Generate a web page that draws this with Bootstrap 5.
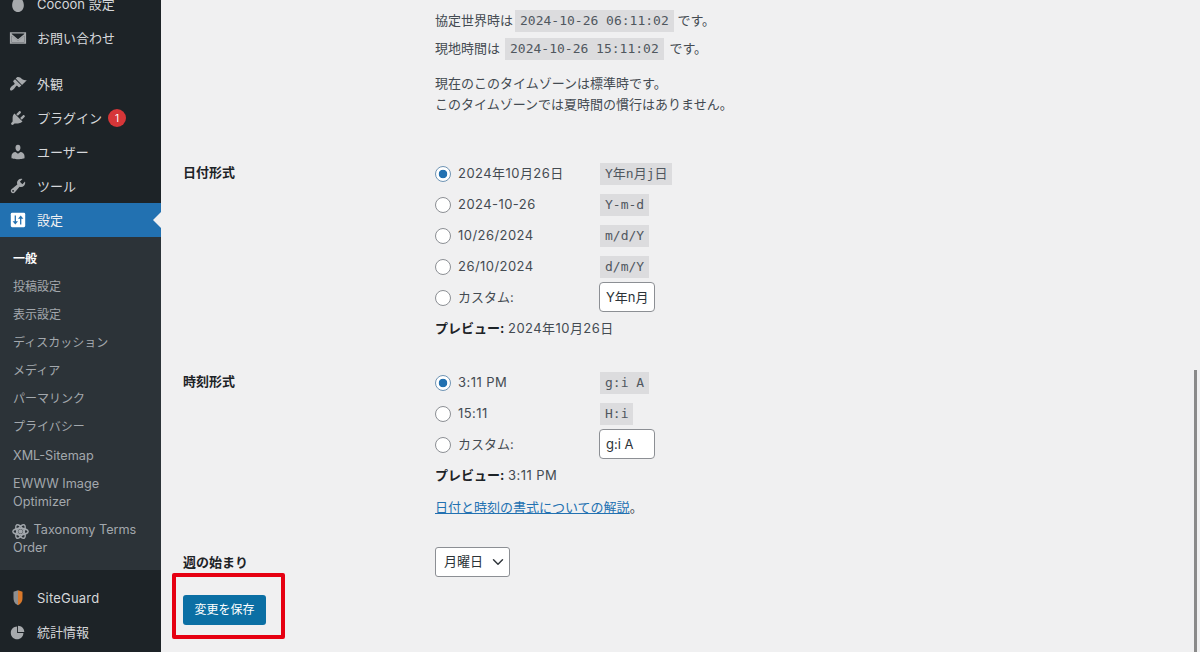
<!DOCTYPE html>
<html lang="ja">
<head>
    <meta charset="UTF-8">
    <meta name="viewport" content="width=device-width, initial-scale=1.0">
    <title>一般設定</title>
    <link href="https://cdn.jsdelivr.net/npm/bootstrap@5.3.0/dist/css/bootstrap.min.css" rel="stylesheet">
    <style>
        html, body { height: 652px; overflow: hidden; }
        body {
            background: #f0f0f1;
            color: #444b52;
            font-family: Inter, "Noto Sans CJK JP", sans-serif;
            font-size: 13px;
            line-height: 21px;
        }
        /* sidebar */
        .side-menu { width: 161px; height: 652px; flex: none; background: #1d2327; overflow: hidden; }
        .side-list { margin: -13px 0 0; padding: 0; list-style: none; }
        .side-item {
            position: relative;
            display: flex;
            align-items: center;
            height: 34px;
            padding-left: 9px;
            color: #d5d7da;
            font-size: 13px;
        }
        .side-item svg { flex: none; width: 18px; height: 18px; margin-right: 10px; fill: #a7aaad; }
        .side-gap { margin-top: 12px; }
        .side-active { background: #2271b1; color: #f0f0f1; }
        .side-active::after {
            content: "";
            position: absolute;
            right: 0;
            top: 9px;
            border: 8px solid transparent;
            border-right-color: #f0f0f1;
            border-left-width: 0;
        }
        .side-count {
            width: 18px;
            height: 18px;
            margin-left: 6px;
            border-radius: 50%;
            background: #d63638;
            color: #fff;
            font-size: 10px;
            line-height: 18px;
            text-align: center;
        }
        .side-latin { letter-spacing: .2px; }
        .side-sub { margin: 0 0 11px; padding: 8px 0 8px; list-style: none; background: #2c3338; }
        .side-sub li { padding: 5px 12px 5px 13px; font-size: 12px; line-height: 18px; color: #a3a8ad; }
        .side-sub li.side-current { color: #fff; font-weight: 600; }
        .side-sub li.sub-latin { font-size: 12.7px; }
        .side-sub li.sub-first { padding-top: 6px; }
        .side-sub svg { width: 17px; height: 17px; vertical-align: -3px; margin: -3px 1px -3px -1px; }
        /* form */
        .main-area { flex: 1; min-width: 0; padding: 10px 0 0 22px; }
        .field-row { display: flex; }
        .field-name { width: 252px; flex: none; font-weight: 600; color: #1d2327; }
        .mono-code {
            display: inline-block;
            padding: 0 5px;
            background: #dcdcde;
            color: #50575e;
            font-family: "DejaVu Sans Mono", "Noto Sans CJK JP", monospace;
            font-size: 13px;
            line-height: 22px;
        }
        .time-line { height: 22px; margin-bottom: 6px; }
        .time-utc code { margin-left: 2px; }
        .time-local code { margin: 0 2px 0 5px; }
        .time-note { margin: 12.500px 0 43.500px; }
        .choice-row { display: flex; align-items: center; height: 31px; margin: 0; }
        .choice-row .form-check-input {
            flex: none;
            width: 16px;
            height: 16px;
            margin: 0 7px 0 0;
            background: #fff;
            border: 1px solid #8c8f94;
        }
        .choice-row .form-check-input:checked {
            border-color: #6f94b4;
            background: #fff radial-gradient(circle, #2271b1 0, #2271b1 4px, #fff 4.600px);
        }
        .choice-text { width: 142px; flex: none; }
        .wide-digits { letter-spacing: .45px; }
        .custom-box {
            width: 56px;
            height: 30px;
            padding: 0 6px;
            margin: -2px 0 0 -1px;
            border: 1px solid #8c8f94;
            border-radius: 4px;
            background: #fff;
            color: #2c3338;
            font-size: 13px;
        }
        .preview-line { margin: 5px 0 0; }
        .preview-line b { font-weight: 700; color: #1d2327; }
        .format-group { margin-bottom: 28px; }
        .format-help { margin: 11px 0 0; }
        .format-help a { color: #2271b1; }
        .week-row { margin-top: 1px; align-items: center; }
        .week-select {
            width: 75px;
            height: 30px;
            padding: 0 20px 0 8px;
            border: 1px solid #8c8f94;
            border-radius: 3px;
            color: #2c3338;
            font-size: 13px;
            background-size: 16px 12px;
            background-position: right 3px center;
        }
        .save-btn {
            display: block;
            width: 83px;
            height: 30px;
            margin-top: 18px;
            padding: 0;
            background: #0b6fa4;
            border: 0;
            border-radius: 3px;
            color: #fff;
            font-size: 12px;
        }
        /* annotation and scrollbar lying over the page */
        .red-frame {
            position: absolute;
            left: 172px;
            top: 573px;
            width: 113px;
            height: 66px;
            border: 4px solid #e60012;
            border-radius: 2px;
        }
        .scroll-thumb {
            position: absolute;
            left: 1194px;
            top: 370px;
            width: 3px;
            height: 282px;
            background: #8a8a8a;
        }
    </style>
</head>
<body class="d-flex">
    <nav class="side-menu">
        <ul class="side-list">
            <li class="side-item"><svg viewBox="0 0 20 20"><path d="M10 1c1 0 1.400 1 2.600 2C15 5 16.500 8 16.500 11.500 16.500 16 13.500 19 10 19S3.500 16 3.500 11.500C3.500 6 7.500 1 10 1z"/></svg>Cocoon 設定</li>
            <li class="side-item"><svg viewBox="0 0 20 20"><path fill-rule="evenodd" d="M1 3.500h18v13H1zM3 5.500l7 6 7-6v-.4H3zM3 7.500v7.400h14V7.500l-7 6z"/><path d="M3 7.300l7 6 7-6v7.700H3z"/></svg>お問い合わせ</li>
            <li class="side-item side-gap"><svg viewBox="0 0 20 20"><path d="M14.480 11.060L7.410 3.990l1.500-1.500c.5-.56 2.300-.47 3.510.32 1.210.8 1.430 1.280 2.910 2.100 1.180.64 2.450 1.260 4.450.85zm-.71.71L6.700 4.700 4.930 6.470c-.39.39-.39 1.020 0 1.410l1.060 1.060c.39.39.39 1.030 0 1.420-.6.6-1.430 1.110-2.210 1.690-.35.26-.7.53-1.010.84-1.430 1.430-2.300 2.960-1.300 3.960s2.530.13 3.960-1.300c.31-.31.58-.66.84-1.010.58-.78 1.090-1.610 1.690-2.210.39-.39 1.030-.39 1.420 0l1.060 1.060c.39.39 1.020.39 1.410 0z"/></svg>外観</li>
            <li class="side-item"><svg viewBox="0 0 20 20"><path d="M13.110 4.360L9.870 7.600 8 5.730l3.240-3.240c.35-.34 1.050-.2 1.560.32.52.51.66 1.210.31 1.550zm-8 1.770l.91-1.120 9.010 9.010-1.190.84c-.71.71-2.630 1.160-3.820 1.160H6.140L4.900 17.260c-.59.59-1.540.59-2.120 0-.59-.58-.59-1.530 0-2.120l1.240-1.240v-3.880c0-1.130.4-3.190 1.090-3.890zm7.260 3.970l3.240-3.240c.34-.35 1.040-.21 1.550.31.52.51.66 1.210.31 1.550l-3.240 3.250z"/></svg>プラグイン<span class="side-count">1</span></li>
            <li class="side-item"><svg viewBox="0 0 20 20"><path d="M10 9.250c-2.270 0-2.730-3.440-2.730-3.440C7 4.020 7.820 2 9.970 2c2.160 0 2.980 2.020 2.710 3.810 0 0-.41 3.440-2.680 3.440zm0 2.570L12.720 10c2.390 0 4.520 2.330 4.520 4.530v2.490s-3.650 1.130-7.240 1.130c-3.650 0-7.240-1.130-7.240-1.130v-2.490c0-2.250 1.940-4.480 4.470-4.480z"/></svg>ユーザー</li>
            <li class="side-item"><svg viewBox="0 0 20 20"><path d="M16.680 9.770c-1.340 1.340-3.300 1.670-4.950.99l-5.410 6.520c-.99.99-2.590.99-3.580 0s-.99-2.590 0-3.570l6.520-5.420c-.68-1.650-.35-3.610.99-4.950 1.280-1.280 3.120-1.620 4.720-1.060l-2.890 2.890 2.820 2.820 2.860-2.870c.53 1.580.18 3.390-1.080 4.650zM3.810 16.210c.4.39 1.040.39 1.430 0 .4-.4.4-1.040 0-1.430-.39-.4-1.030-.4-1.430 0-.39.39-.39 1.030 0 1.430z"/></svg>ツール</li>
            <li class="side-item side-active"><svg viewBox="0 0 20 20"><rect x="2" y="2" width="16" height="16" rx="1.500" fill="#fff"/><path fill="#2271b1" d="M6.300 5h1.400v6.500H10L7 15 4 11.500h2.300zM12.300 15h1.400V8.500H16L13 5l-3 3.500h2.300z"/></svg>設定</li>
        </ul>
        <ul class="side-sub">
            <li class="side-current">一般</li>
            <li>投稿設定</li>
            <li>表示設定</li>
            <li>ディスカッション</li>
            <li>メディア</li>
            <li>パーマリンク</li>
            <li>プライバシー</li>
            <li class="sub-latin sub-first">XML-Sitemap</li>
            <li class="sub-latin">EWWW Image Optimizer</li>
            <li class="sub-latin"><svg viewBox="0 0 20 20" fill="none" stroke="#a3a8ad" stroke-width="1.700"><ellipse cx="10" cy="10" rx="9" ry="3.800"/><ellipse cx="10" cy="10" rx="9" ry="3.800" transform="rotate(60 10 10)"/><ellipse cx="10" cy="10" rx="9" ry="3.800" transform="rotate(120 10 10)"/><circle cx="10" cy="10" r="1.800" fill="#a3a8ad"/></svg> Taxonomy Terms Order</li>
        </ul>
        <ul class="side-list mt-0">
            <li class="side-item side-latin"><svg viewBox="0 0 20 20"><path fill="#8d8f91" d="M5 3l5-1.500V18l-1-.4C6 16 5 13 5 10z"/><path fill="#d9782a" d="M10 1.500L15 3v7c0 3-1 6-5 8z"/></svg>SiteGuard</li>
            <li class="side-item"><svg viewBox="0 0 20 20"><path d="M10 10V3c3.870 0 7 3.130 7 7h-7zM9 4v7h7c0 3.870-3.130 7-7 7s-7-3.130-7-7 3.130-7 7-7z"/></svg>統計情報</li>
        </ul>
    </nav>

    <main class="main-area">
        <div class="field-row">
            <div class="field-name"></div>
            <div>
                <div class="time-line time-utc">協定世界時は<code class="mono-code">2024-10-26 06:11:02</code> です。</div>
                <div class="time-line time-local">現地時間は<code class="mono-code">2024-10-26 15:11:02</code> です。</div>
                <p class="time-note">現在のこのタイムゾーンは標準時です。<br>このタイムゾーンでは夏時間の慣行はありません。</p>
            </div>
        </div>

        <div class="field-row">
            <div class="field-name pt-1">日付形式</div>
            <div class="format-group">
                <label class="choice-row"><input class="form-check-input" type="radio" name="dateFormat" checked><span class="choice-text wide-digits">2024年10月26日</span><code class="mono-code">Y年n月j日</code></label>
                <label class="choice-row"><input class="form-check-input" type="radio" name="dateFormat"><span class="choice-text wide-digits">2024-10-26</span><code class="mono-code">Y-m-d</code></label>
                <label class="choice-row"><input class="form-check-input" type="radio" name="dateFormat"><span class="choice-text wide-digits">10/26/2024</span><code class="mono-code">m/d/Y</code></label>
                <label class="choice-row"><input class="form-check-input" type="radio" name="dateFormat"><span class="choice-text wide-digits">26/10/2024</span><code class="mono-code">d/m/Y</code></label>
                <label class="choice-row"><input class="form-check-input" type="radio" name="dateFormat"><span class="choice-text">カスタム:</span><input class="custom-box" type="text" value="Y年n月j日"></label>
                <p class="preview-line"><b>プレビュー:</b> <span class="wide-digits">2024年10月26日</span></p>
            </div>
        </div>

        <div class="field-row">
            <div class="field-name pt-1">時刻形式</div>
            <div class="format-group">
                <label class="choice-row"><input class="form-check-input" type="radio" name="timeFormat" checked><span class="choice-text wide-digits">3:11 PM</span><code class="mono-code">g:i A</code></label>
                <label class="choice-row"><input class="form-check-input" type="radio" name="timeFormat"><span class="choice-text wide-digits">15:11</span><code class="mono-code">H:i</code></label>
                <label class="choice-row"><input class="form-check-input" type="radio" name="timeFormat"><span class="choice-text">カスタム:</span><input class="custom-box" type="text" value="g:i A"></label>
                <p class="preview-line"><b>プレビュー:</b> <span class="wide-digits">3:11 PM</span></p>
                <p class="format-help"><a href="#">日付と時刻の書式についての解説</a>。</p>
            </div>
        </div>

        <div class="field-row week-row">
            <div class="field-name">週の始まり</div>
            <select class="form-select week-select"><option>月曜日</option></select>
        </div>

        <button class="btn save-btn" type="button">変更を保存</button>
    </main>

    <div class="red-frame"></div>
    <div class="scroll-thumb"></div>

    <script src="https://cdn.jsdelivr.net/npm/bootstrap@5.3.0/dist/js/bootstrap.bundle.min.js"></script>
</body>
</html>
